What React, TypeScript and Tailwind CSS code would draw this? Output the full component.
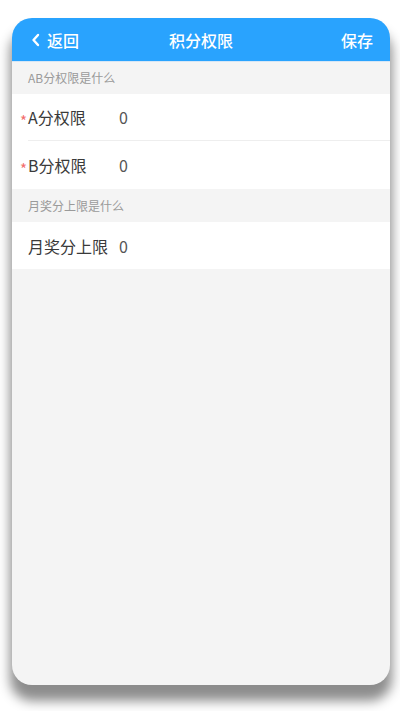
import React from "react";

const font = { fontFamily: '"Noto Sans CJK SC", "Noto Sans", sans-serif' };

function Row({ label, value, required, divider, h = "h-[47px]" }: { label: string; value: string; required?: boolean; divider?: boolean; h?: string }) {
  return (
    <div className="bg-white pl-[16px]">
      <div className={`flex items-center ${h} ${divider ? "border-b border-[#eeeeee]" : ""}`}>
        <div className="relative w-[91px] text-[16px] text-[#3a3a3a] leading-none">
          {required && (
            <span className="absolute left-[-8px] top-[calc(50%-4px)] text-[15px] leading-none text-[#f26d6d]">*</span>
          )}
          {label}
        </div>
        <div className="text-[16px] text-[#555555] leading-none">{value}</div>
      </div>
    </div>
  );
}

function Section({ title, h = "h-[32px]" }: { title: string; h?: string }) {
  return <div className={`${h} flex items-center pl-[16px] text-[12px] text-[#9a9a9a]`}>{title}</div>;
}

export default function App() {
  return (
    <div className="w-[400px] h-[711px] bg-white pt-[18px] pl-[12px]" style={font}>
      <div className="w-[378px] h-[667px] rounded-[20px] overflow-hidden bg-[#f4f4f4] shadow-[0_14px_12px_2px_rgba(0,0,0,0.45)] flex flex-col">
        <div className="h-[44px] shrink-0 bg-[#29a3fe] border-b border-[#d6e6f5] flex items-center justify-between px-[19px] text-white text-[16px] font-medium relative">
          <div className="flex items-center gap-[6px]">
            <svg width="10" height="14" viewBox="0 0 10 14" fill="none">
              <path d="M7 2 L2.5 7 L7 12" stroke="white" strokeWidth="2.4" strokeLinecap="round" strokeLinejoin="round" />
            </svg>
            <span>返回</span>
          </div>
          <span className="absolute left-1/2 -translate-x-1/2">积分权限</span>
          <span className="mr-[-2px]">保存</span>
        </div>
        <Section title="AB分权限是什么" />
        <Row label="A分权限" value="0" required divider />
        <Row label="B分权限" value="0" required h="h-[48px]" />
        <Section title="月奖分上限是什么" h="h-[33px]" />
        <Row label="月奖分上限" value="0" />
      </div>
    </div>
  );
}
